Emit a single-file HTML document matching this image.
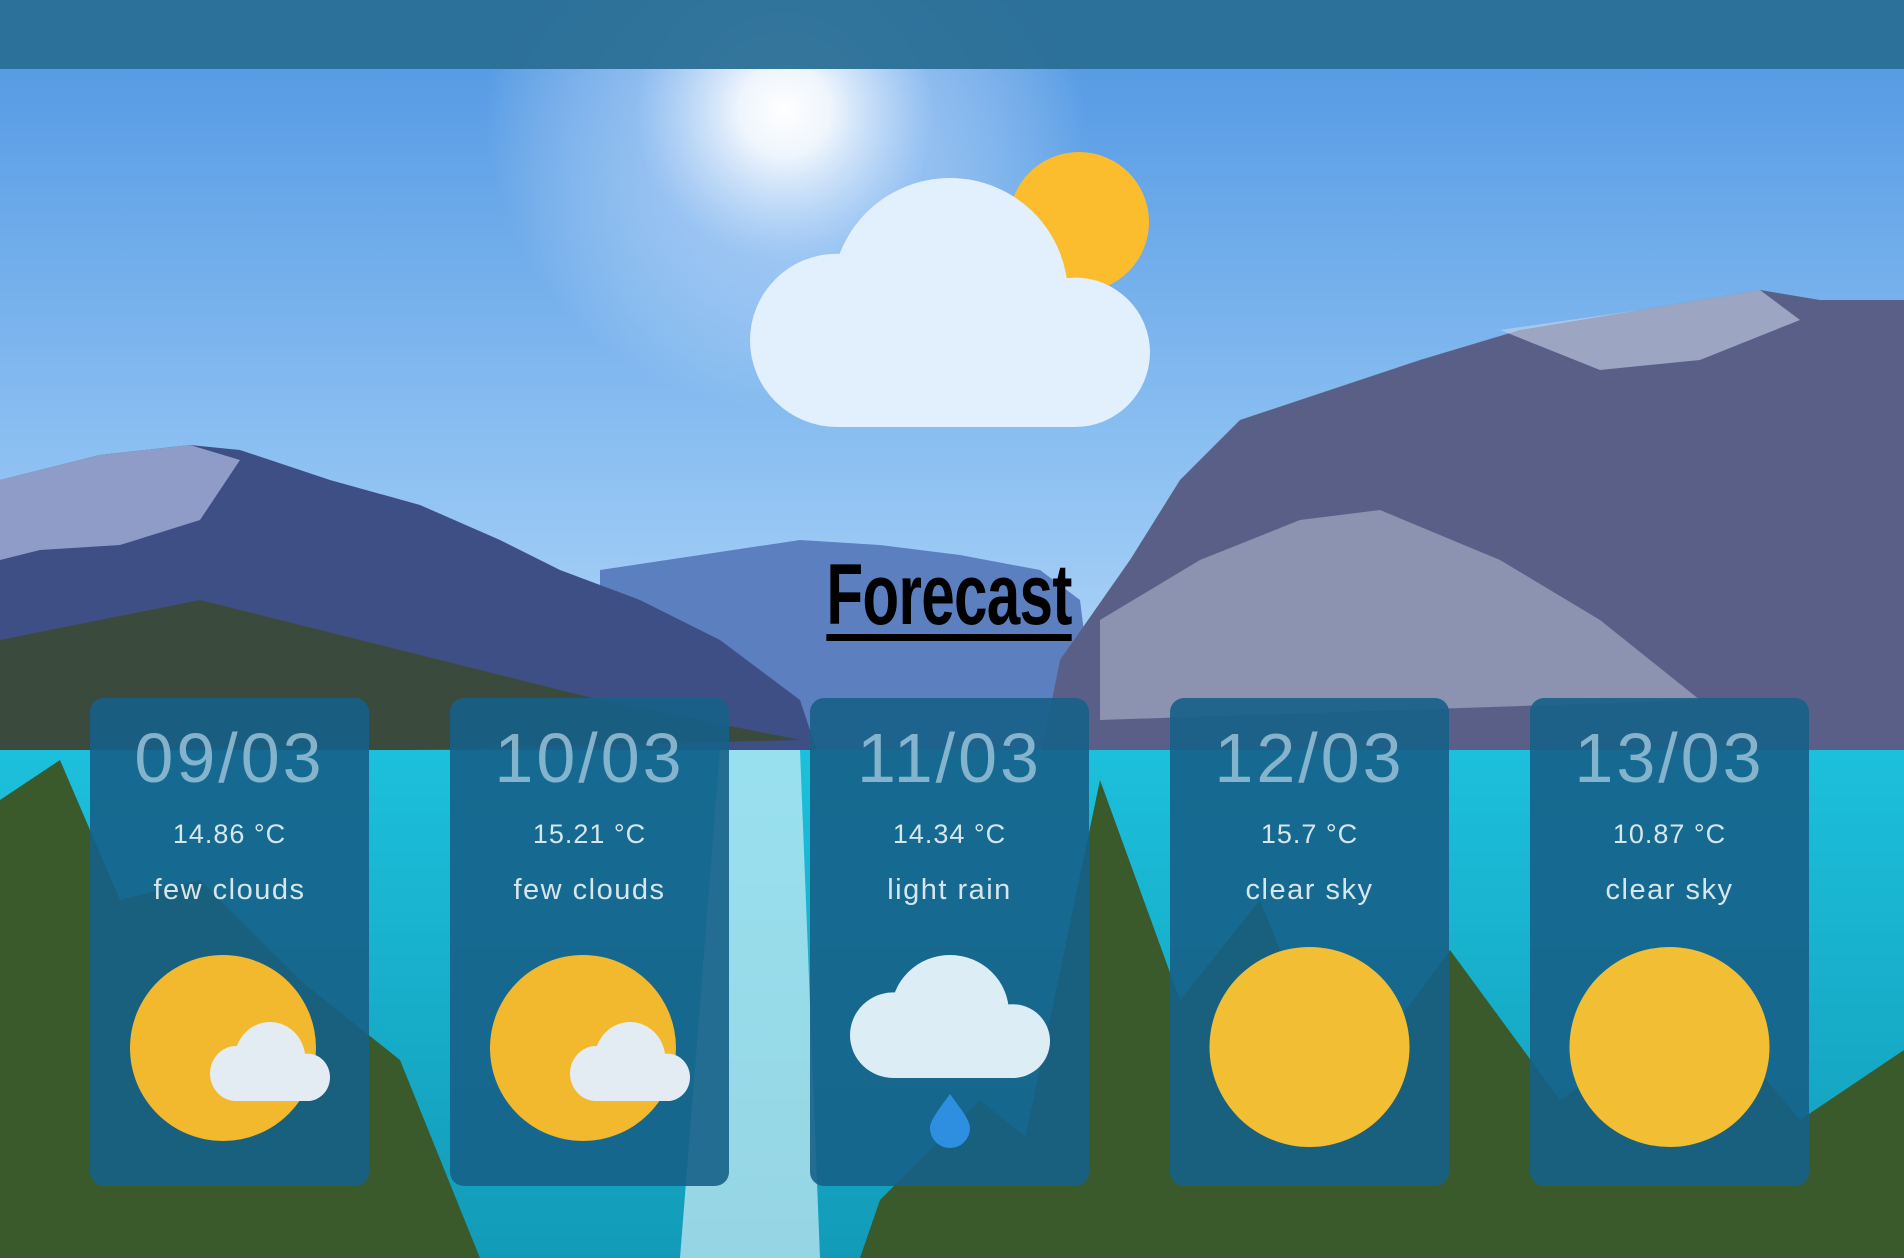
<!DOCTYPE html>
<html><head><meta charset="utf-8"><style>
html,body{margin:0;padding:0;width:1904px;height:1258px;overflow:hidden;font-family:"Liberation Sans",sans-serif}
svg{position:absolute;left:0;top:0}
.card{position:absolute;top:698px;width:279px;height:488px;background:rgba(22,96,136,0.9);border-radius:14px;text-align:center;color:#d6e6ea}
.date{position:absolute;top:20px;left:0;width:100%;font-size:70px;letter-spacing:3px;color:rgba(170,205,225,0.75)}
.temp{position:absolute;top:121px;left:0;width:100%;font-size:27px;letter-spacing:1px}
.desc{position:absolute;top:176px;left:0;width:100%;font-size:29px;letter-spacing:1.5px}
.title{position:absolute;left:749px;top:546px;width:400px;text-align:center;font-family:"Liberation Sans Narrow","Liberation Sans",sans-serif;font-weight:bold;font-size:86px;color:#000;transform:scaleX(0.7);letter-spacing:-1px;text-decoration:underline;text-decoration-thickness:7px;text-underline-offset:10px;white-space:nowrap}
</style></head><body>
<svg width="1904" height="1258" viewBox="0 0 1904 1258">
<defs>
<linearGradient id="sky" x1="0" y1="0" x2="0" y2="1"><stop offset="0" stop-color="#4e95e2"/><stop offset="0.6" stop-color="#8cc0f2"/><stop offset="1" stop-color="#b8daf8"/></linearGradient>
<radialGradient id="sun" cx="785" cy="110" r="300" gradientUnits="userSpaceOnUse"><stop offset="0" stop-color="#fff"/><stop offset="0.15" stop-color="#fff" stop-opacity="0.9"/><stop offset="0.5" stop-color="#dbe9ff" stop-opacity="0.4"/><stop offset="1" stop-color="#fff" stop-opacity="0"/></radialGradient>
<linearGradient id="lake" x1="0" y1="0" x2="0" y2="1"><stop offset="0" stop-color="#1cc0dc"/><stop offset="1" stop-color="#129bb8"/></linearGradient>
<symbol id="cloud" viewBox="0 0 400 250" preserveAspectRatio="none"><circle cx="87" cy="163" r="87"/><circle cx="200" cy="118" r="118"/><circle cx="325" cy="175" r="75"/><rect x="87" y="163" width="238" height="87"/></symbol>
</defs>
<rect width="1904" height="760" fill="url(#sky)"/>
<rect width="1904" height="600" fill="url(#sun)"/>
<polygon points="600,570 700,555 800,540 880,545 960,555 1040,570 1080,600 1100,760 600,760" fill="#5c7fc0"/>
<polygon points="0,480 100,455 190,445 240,450 330,480 420,505 500,540 560,570 640,600 720,640 800,700 820,760 0,760" fill="#3e4f86"/>
<polygon points="0,480 100,455 190,445 240,460 200,520 120,545 40,550 0,560" fill="#8f9cc8"/>
<polygon points="0,640 200,600 400,650 600,700 800,740 0,760" fill="#3a4a3c"/>
<polygon points="1060,660 1130,560 1180,480 1240,420 1330,390 1420,360 1520,330 1640,310 1760,290 1820,300 1904,300 1904,760 1040,760" fill="#5a5f88"/>
<polygon points="1100,620 1200,560 1300,520 1380,510 1500,560 1600,620 1700,700 1100,720" fill="#8c93b0"/>
<polygon points="1500,330 1640,310 1760,290 1800,320 1700,360 1600,370" fill="#c8d3ea" opacity="0.6"/>
<rect y="750" width="1904" height="508" fill="url(#lake)"/>
<polygon points="720,750 800,750 820,1258 680,1258" fill="#cfeef6" opacity="0.7"/>
<polygon points="0,800 60,760 120,900 200,880 300,980 400,1060 480,1258 0,1258" fill="#3b5a2c"/>
<polygon points="1100,780 1180,1000 1260,900 1340,1100 1450,950 1560,1100 1700,1000 1800,1120 1904,1050 1904,1258 1000,1258" fill="#3b5a2c"/>
<polygon points="880,1200 980,1100 1080,1180 1150,1258 860,1258" fill="#3b5a2c"/>
<rect width="1904" height="69" fill="#2a6f96" opacity="0.95"/>
<circle cx="1079" cy="222" r="70" fill="#fbbd2e"/>
<use href="#cloud" x="750" y="178" width="400" height="249" fill="#e1f0fc"/>
</svg>
<div class="title">Forecast</div>

<div class="card" style="left:90px"><div class="date">09/03</div><div class="temp">14.86 °C</div><div class="desc">few clouds</div>
<svg width="279" height="488" style="position:absolute;left:0;top:0"><circle cx="133" cy="350" r="93" fill="#f2b92e"/><use href="#cloud" x="120" y="324" width="120" height="79" fill="#e2ecf2"/></svg></div>
<div class="card" style="left:450px"><div class="date">10/03</div><div class="temp">15.21 °C</div><div class="desc">few clouds</div>
<svg width="279" height="488" style="position:absolute;left:0;top:0"><circle cx="133" cy="350" r="93" fill="#f2b92e"/><use href="#cloud" x="120" y="324" width="120" height="79" fill="#e2ecf2"/></svg></div>
<div class="card" style="left:810px"><div class="date">11/03</div><div class="temp">14.34 °C</div><div class="desc">light rain</div>
<svg width="279" height="488" style="position:absolute;left:0;top:0"><use href="#cloud" x="40" y="257" width="200" height="123" fill="#dcedf6"/><path d="M140 396 C150 410 160 422 160 430 A20 20 0 0 1 120 430 C120 422 130 410 140 396Z" fill="#2e8fe0"/></svg></div>
<div class="card" style="left:1170px"><div class="date">12/03</div><div class="temp">15.7 °C</div><div class="desc">clear sky</div>
<svg width="279" height="488" style="position:absolute;left:0;top:0"><circle cx="139.5" cy="349" r="100" fill="#f2be34"/></svg></div>
<div class="card" style="left:1530px"><div class="date">13/03</div><div class="temp">10.87 °C</div><div class="desc">clear sky</div>
<svg width="279" height="488" style="position:absolute;left:0;top:0"><circle cx="139.5" cy="349" r="100" fill="#f2be34"/></svg></div>
</body></html>
